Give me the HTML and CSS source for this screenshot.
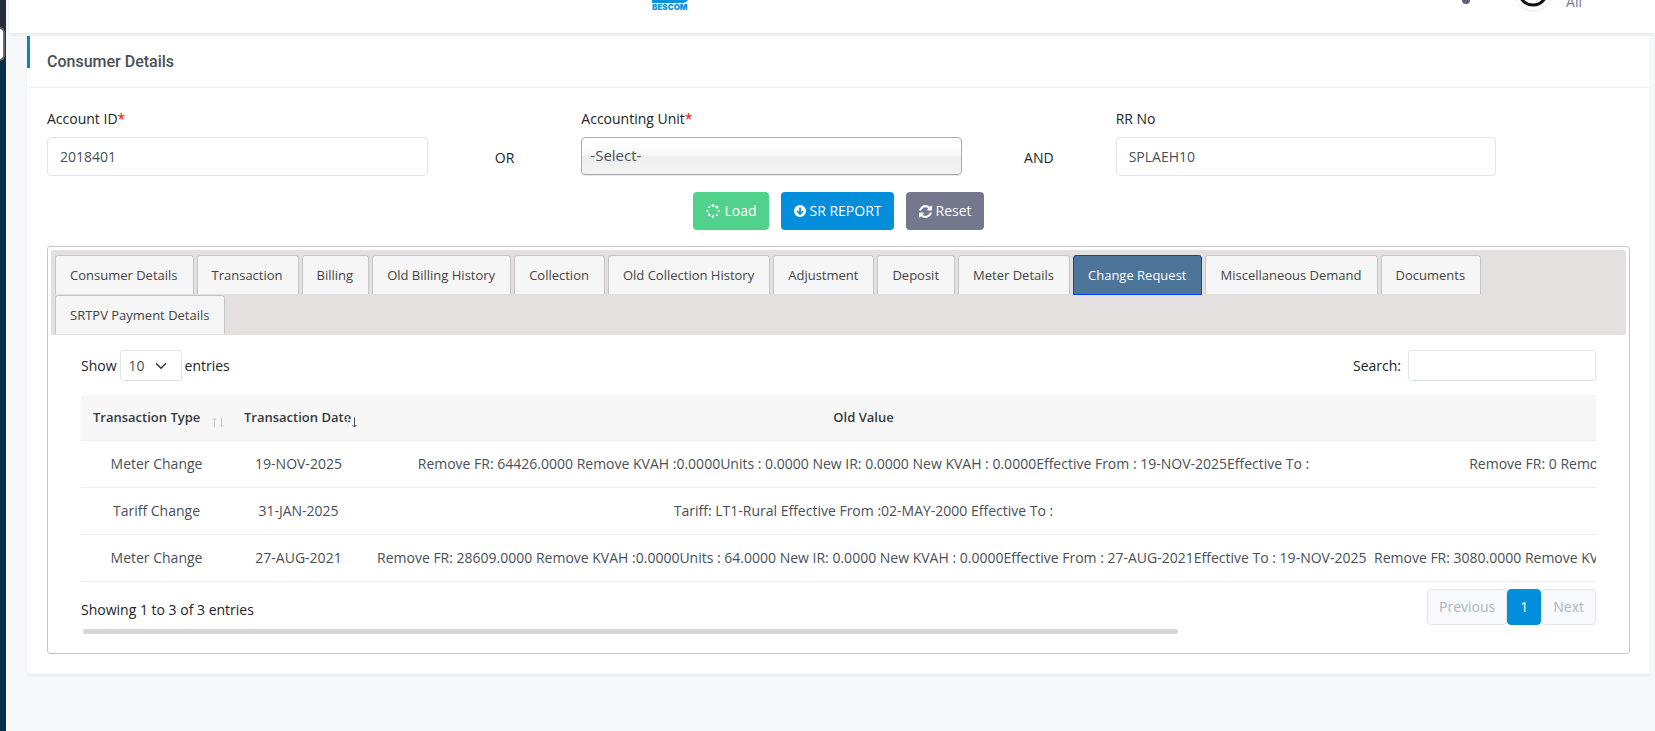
FILE: index.html
```html
<!DOCTYPE html>
<html lang="en">
<head>
<meta charset="UTF-8" />
<meta name="viewport" content="width=device-width, initial-scale=1" />
<title>Consumer Details</title>
<link rel="stylesheet" href="styles.css">
</head>
<body>

<aside class="sidebar">
  <div class="sidebar-brand"></div>
  <button type="button" class="sidebar-toggle" aria-label="Toggle menu"></button>
</aside>

<div class="page">
  <header class="topbar">
    <div class="logo">
      <svg class="logo-mark" width="36" height="24" viewBox="0 0 36 24" aria-hidden="true">
        <path d="M0 0H36V21Q34 24 30 24H0Z" fill="#0493da"/>
      </svg>
      <span class="logo-text">BESCOM</span>
    </div>
    <div class="topbar-right">
      <svg class="bell" width="20" height="24" viewBox="0 0 20 24" aria-hidden="true">
        <path d="M10 2a6 6 0 0 0-6 6v5l-2 3h16l-2-3V8a6 6 0 0 0-6-6z" fill="none" stroke="#5c6078" stroke-width="2"/>
        <circle cx="10" cy="20" r="4" fill="#5c6078"/>
      </svg>
      <svg class="avatar" width="42" height="42" viewBox="0 0 42 42" aria-hidden="true">
        <circle cx="21" cy="21" r="20" fill="#fff" stroke="#e9e9ef"/>
        <circle cx="21" cy="21" r="14" fill="none" stroke="#111" stroke-width="3"/>
      </svg>
      <span class="user-scope">All</span>
    </div>
  </header>

  <main class="card">
    <div class="card-header">
      <h4>Consumer Details</h4>
    </div>
    <div class="card-body">
      <form id="searchForm">
        <div class="form-row">
          <div class="field">
            <label for="accountId">Account ID<span class="required">*</span></label>
            <input type="text" id="accountId" value="2018401">
          </div>
          <span class="joiner">OR</span>
          <div class="field">
            <label for="accountingUnit">Accounting Unit<span class="required">*</span></label>
            <select id="accountingUnit">
              <option>-Select-</option>
            </select>
          </div>
          <span class="joiner">AND</span>
          <div class="field">
            <label for="rrNo">RR No</label>
            <input type="text" id="rrNo" value="SPLAEH10">
          </div>
        </div>
        <div class="actions">
          <button type="button" class="btn btn-success">
            <svg width="14" height="14" viewBox="0 0 14 14" fill="#fff" aria-hidden="true">
              <circle cx="7" cy="1.5" r="1.5"/><circle cx="10.9" cy="3.1" r="1.5"/><circle cx="12.6" cy="7" r="1"/><circle cx="10.9" cy="10.9" r="1.1"/>
              <circle cx="7" cy="12.5" r="1.3"/><circle cx="3.1" cy="10.9" r="1.3"/><circle cx="1.4" cy="7" r="1.1"/><circle cx="3.1" cy="3.1" r="1"/>
            </svg>
            Load
          </button>
          <button type="button" class="btn btn-primary">
            <svg width="12" height="12" viewBox="0 0 12 12" aria-hidden="true">
              <circle cx="6" cy="6" r="6" fill="#fff"/>
              <path d="M6 2.4v6.4M3 6l3 3 3-3" fill="none" stroke="#038edc" stroke-width="1.7"/>
            </svg>
            SR REPORT
          </button>
          <button type="button" class="btn btn-secondary">
            <svg width="13" height="13" viewBox="0 0 1536 1536" fill="#fff" aria-hidden="true">
              <path d="M1511 928q0 5-1 7-64 268-268 434.500t-478 166.500q-146 0-282.500-55t-243.500-157l-129 129q-19 19-45 19t-45-19-19-45v-448q0-26 19-45t45-19h448q26 0 45 19t19 45-19 45l-137 137q71 66 161 102t187 36q134 0 250-65t186-179q11-17 53-117 8-23 30-23h192q13 0 22.500 9.500t9.500 22.500zm25-800v448q0 26-19 45t-45 19h-448q-26 0-45-19t-19-45 19-45l138-138q-148-137-349-137-134 0-250 65t-186 179q-11 17-53 117-8 23-30 23h-199q-13 0-22.500-9.500t-9.500-22.500v-7q65-268 270-434.500t480-166.500q146 0 284 55.500t245 156.500l130-129q19-19 45-19t45 19 19 45z"/>
            </svg>
            Reset
          </button>
        </div>
      </form>

      <section class="tabs">
        <nav class="tab-list">
          <a href="#consumer">Consumer Details</a>
          <a href="#transaction">Transaction</a>
          <a href="#billing">Billing</a>
          <a href="#old-billing">Old Billing History</a>
          <a href="#collection">Collection</a>
          <a href="#old-collection">Old Collection History</a>
          <a href="#adjustment">Adjustment</a>
          <a href="#deposit">Deposit</a>
          <a href="#meter">Meter Details</a>
          <a href="#change-request" class="active">Change Request</a>
          <a href="#misc">Miscellaneous Demand</a>
          <a href="#documents">Documents</a>
          <a href="#srtpv">SRTPV Payment Details</a>
        </nav>

        <div class="tab-panel" id="change-request">
          <div class="table-tools">
            <label class="length">Show
              <select>
                <option>10</option>
                <option>25</option>
                <option>50</option>
              </select>
              entries
            </label>
            <label class="search">Search:
              <input type="search">
            </label>
          </div>

          <div class="table-scroll">
            <table>
              <colgroup>
                <col class="col-type">
                <col class="col-date">
                <col class="col-old">
                <col class="col-new">
              </colgroup>
              <thead>
                <tr>
                  <th class="sortable">Transaction Type
                    <svg class="sort" width="12" height="11" viewBox="0 0 12 11" aria-hidden="true">
                      <path class="up" d="M2.500 10.500V1M.500 3l2-2 2 2"/>
                      <path class="down" d="M9.500 .500V10M7.500 8l2 2 2-2"/>
                    </svg>
                  </th>
                  <th class="sortable desc">Transaction Date
                    <svg class="sort" width="12" height="11" viewBox="0 0 12 11" aria-hidden="true">
                      <path class="up" d="M2.500 10.500V1M.500 3l2-2 2 2"/>
                      <path class="down" d="M9.500 .500V10M7.500 8l2 2 2-2"/>
                    </svg>
                  </th>
                  <th>Old Value</th>
                  <th>New Value</th>
                </tr>
              </thead>
              <tbody>
                <tr>
                  <td>Meter Change</td>
                  <td>19-NOV-2025</td>
                  <td>Remove FR: 64426.0000 Remove KVAH :0.0000Units : 0.0000 New IR: 0.0000 New KVAH : 0.0000Effective From : 19-NOV-2025Effective To :</td>
                  <td>Remove FR: 0 Remove KVAH :0Units : 0 New IR: 0 New KVAH : 0.00</td>
                </tr>
                <tr>
                  <td>Tariff Change</td>
                  <td>31-JAN-2025</td>
                  <td>Tariff: LT1-Rural Effective From :02-MAY-2000 Effective To :</td>
                  <td></td>
                </tr>
                <tr>
                  <td>Meter Change</td>
                  <td>27-AUG-2021</td>
                  <td>Remove FR: 28609.0000 Remove KVAH :0.0000Units : 64.0000 New IR: 0.0000 New KVAH : 0.0000Effective From : 27-AUG-2021Effective To : 19-NOV-2025</td>
                  <td>Remove FR: 3080.0000 Remove KVAH :0.0000Units : 64.0000 New IR: 0.0000 New KVAH : 0.0000</td>
                </tr>
              </tbody>
            </table>
          </div>

          <div class="table-footer">
            <span>Showing 1 to 3 of 3 entries</span>
            <div class="pagination">
              <button type="button" disabled>Previous</button>
              <button type="button" class="current">1</button>
              <button type="button" disabled>Next</button>
            </div>
          </div>
          <div class="scroll-track"><div class="scroll-thumb"></div></div>
        </div>
      </section>
    </div>
  </main>
</div>

</body>
</html>
```
FILE: styles.css
```css
* {
  box-sizing: border-box;
}
body {
  margin: 0;
  min-height: 100vh;
  display: flex;
  overflow: hidden;
  background: #f7f8fb;
  color: #212529;
  font-family: "Open Sans", sans-serif;
  font-size: 14px;
  line-height: 20px;
}
input, select, button {
  font: inherit;
}

/* sidebar */
.sidebar {
  position: relative;
  flex: none;
  width: 6px;
  background: #032f48;
}
.sidebar-brand {
  height: 61px;
  background: #272d40;
}
.sidebar-toggle {
  position: absolute;
  top: 27px;
  right: 1px;
  width: 34px;
  height: 34px;
  background: #fff;
  border: 2px solid #6b6b6b;
  border-radius: 6px;
}

/* top bar */
.page {
  flex: 1;
  min-width: 0;
}
.topbar {
  display: flex;
  align-items: flex-end;
  justify-content: space-between;
  height: 70px;
  margin: -37px 0 0 3px;
  padding: 0 73px 21px 39%;
  background: #fff;
  box-shadow: 0 2px 3px #e9e9ef;
}
.logo {
  display: flex;
  flex-direction: column;
  width: 36px;
}
.logo-text {
  color: #0493da;
  font-family: Inter, sans-serif;
  font-size: 8px;
  font-weight: 900;
  line-height: 9px;
}
.topbar-right {
  display: flex;
  align-items: flex-end;
}
.bell {
  margin: 0 36px 8px 0;
}
.avatar {
  margin-right: 12px;
}
.user-scope {
  color: #74788d;
}

/* card */
.card {
  margin: 3px 5px 0 21px;
  background: #fff;
  border-radius: 3px;
  box-shadow: 0 2px 3px #e9ebf1;
}
.card-header {
  padding: 15px 20px 14px 17px;
  border-bottom: 1px solid #eceef0;
  border-left: 3px solid transparent;
  background: linear-gradient(#1580c0, #1580c0) no-repeat border-box;
  background-size: 3px 32px;
}
.card-header h4 {
  margin: 0;
  color: #495057;
  font-family: Roboto, sans-serif;
  font-size: 16px;
  font-weight: 500;
  line-height: 22px;
}
.card-body {
  padding: 21px 20px 20px;
}

/* search form */
.form-row {
  display: grid;
  grid-template-columns: 3fr 1fr 3fr 1fr 3fr 1fr;
  margin: 0 -10px;
}
.field {
  padding: 0 10px;
}
.field label {
  display: block;
  margin-bottom: 8px;
}
.required {
  color: #f00;
}
.field input, .field select {
  display: block;
  width: 100%;
  height: 39px;
  padding: 0 12px;
  color: #495057;
  background: #fff;
  border: 1px solid #e2e5e8;
  border-radius: 4px;
}
.field select {
  appearance: none;
  height: 38px;
  padding: 0 8px 2px;
  font-size: 15px;
  border-color: #aaa;
  background: linear-gradient(#fff 20%, #f6f6f6 50%, #eee 52%, #f4f4f4 100%);
  box-shadow: 0 1px 1px rgba(0, 0, 0, 0.1);
}
.joiner {
  margin-top: 39px;
  text-align: center;
}
.actions {
  display: flex;
  justify-content: center;
  gap: 12px;
  margin: 16px 0;
}
.btn {
  display: flex;
  align-items: center;
  gap: 4px;
  height: 38px;
  padding: 0 12px 0 13px;
  color: #fff;
  border: 0;
  border-radius: 4px;
}
.btn-success {
  background: #51d28c;
}
.btn-primary {
  background: #038edc;
}
.btn-secondary {
  background: #74788d;
}

/* tabs */
.tabs {
  padding: 3px;
  border: 1px solid #c5c5c5;
  border-radius: 3px;
}
.tab-list {
  display: flex;
  flex-wrap: wrap;
  column-gap: 3px;
  row-gap: 1px;
  padding: 5px 4px 1px;
  background: #e4e0df;
  border-radius: 3px;
}
.tab-list a {
  height: 39px;
  padding: 9px 15px 9px 14px;
  color: #454545;
  background: #f6f6f6;
  border: 1px solid #c5c5c5;
  border-bottom: 0;
  border-radius: 3px 3px 0 0;
  font-size: 13px;
  text-decoration: none;
}
.tab-list a.active {
  height: 40px;
  margin-bottom: -1px;
  color: #fff;
  background: #4d7499;
  border: 1px solid #003eff;
}
.tab-panel {
  padding: 15px 30px 16px;
}

/* table */
.table-tools, .table-footer {
  display: flex;
  justify-content: space-between;
}
.table-tools label {
  display: flex;
  align-items: center;
}
.length {
  gap: 3px;
}
.search {
  gap: 7px;
}
.table-tools select, .table-tools input {
  height: 31px;
  color: #495057;
  background: #fff;
  border: 1px solid #e2e5e8;
  border-radius: 3px;
}
.table-tools select {
  appearance: none;
  width: 62px;
  padding: 0 8px;
  background: #fff url("data:image/svg+xml,%3Csvg xmlns='http://www.w3.org/2000/svg' viewBox='0 0 16 16'%3E%3Cpath fill='none' stroke='%23343a40' stroke-linecap='round' stroke-linejoin='round' stroke-width='2' d='M2 5l6 6 6-6'/%3E%3C/svg%3E") no-repeat right 14px center / 12px;
}
.table-tools input {
  width: 188px;
}
.table-scroll {
  margin-top: 14px;
  overflow: hidden;
}
table {
  width: 1923px;
  table-layout: fixed;
  border-collapse: collapse;
  text-align: center;
  white-space: nowrap;
}
.col-type {
  width: 151px;
}
.col-date {
  width: 133px;
}
.col-old {
  width: 997px;
}
th, td {
  padding: 13px 12px;
  border-bottom: 1px solid #eceef0;
}
td {
  color: #495057;
}
th {
  color: #343a40;
  background: #f7f7f7;
  font-size: 13px;
  font-weight: 600;
  line-height: 19px;
}
th.sortable {
  position: relative;
  padding-right: 0;
  text-align: left;
}
.sort {
  position: absolute;
  right: 8px;
  bottom: 12px;
  fill: none;
  stroke: #c9cbcd;
}
.desc .up {
  stroke: #e4e5e6;
}
.desc .down {
  stroke: #495057;
}
.table-footer {
  align-items: center;
  padding-top: 7px;
}
.table-footer > span {
  padding-top: 6px;
}
.pagination {
  display: flex;
}
.pagination button {
  height: 36px;
  padding: 0 11px;
  color: #adb5bd;
  background: #f8f9fc;
  border: 1px solid #e2e5e8;
  border-radius: 4px;
}
.pagination .current {
  padding: 0 12px;
  color: #fff;
  background: #038edc;
  border-color: #038edc;
}
.scroll-track {
  padding: 4px 2px 0;
}
.scroll-thumb {
  width: 72.5%;
  height: 5px;
  border-radius: 3px;
  background: #d6d6d6;
}
```
